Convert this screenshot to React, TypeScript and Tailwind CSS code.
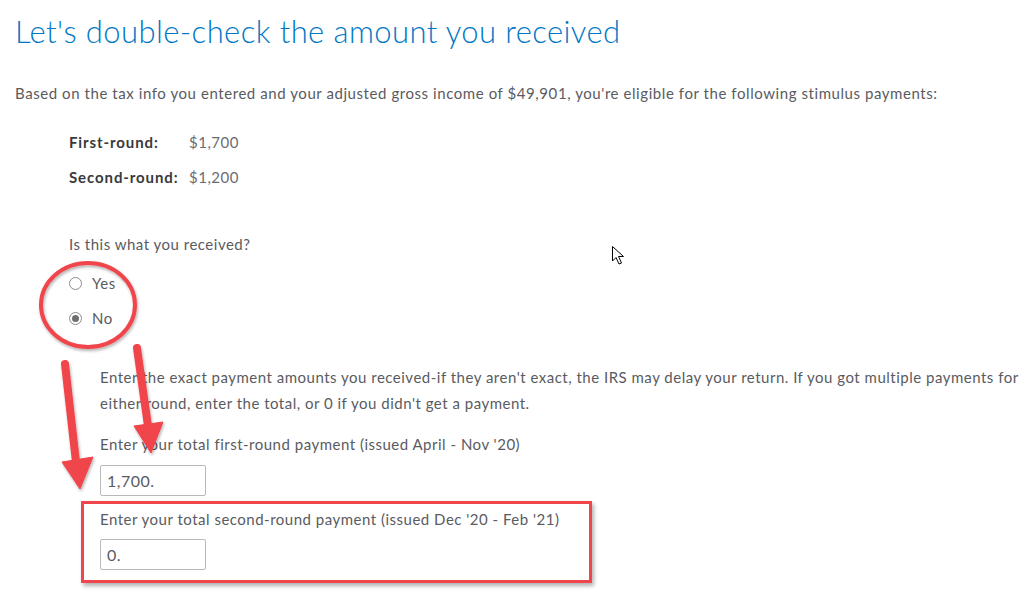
const font = "font-['Lato','Open_Sans',sans-serif]";

function Radio({ label, checked }: { label: string; checked?: boolean }) {
  return (
    <div className="flex items-center h-[35px]">
      <span className="w-[13px] h-[13px] rounded-full border border-[#8d8d8d] bg-white flex items-center justify-center">
        {checked && <span className="w-[7px] h-[7px] rounded-full bg-[#6f6f6f]" />}
      </span>
      <span className="ml-[10px] text-[15px] tracking-[0.5px] text-[#5a5b5f]">{label}</span>
    </div>
  );
}

function Amount({ value }: { value: string }) {
  return (
    <div className="w-[106px] h-[31px] border border-[#b9b9b9] rounded-[2px] flex items-center px-[6px] text-[16px] tracking-[0.5px] text-[#5a5b5f]">
      {value}
    </div>
  );
}

export default function App() {
  return (
    <div className={`relative w-[1029px] h-[602px] bg-white overflow-hidden pl-[15px] ${font}`}>
      <h1 className="text-[31px] font-light leading-[62px] text-[#0077c5] tracking-[0.4px]">
        Let's double-check the amount you received
      </h1>
      <p className="mt-[19px] text-[15px] tracking-[0.57px] leading-[24px] text-[#5a5b5f]">
        Based on the tax info you entered and your adjusted gross income of $49,901, you're eligible for the following stimulus payments:
      </p>

      <div className="ml-[54px] mt-[20px] text-[15px] tracking-[0.5px]">
        <div className="flex leading-[35px]">
          <span className="w-[120px] font-bold tracking-[0.9px] text-[#393a3d]">First-round:</span>
          <span className="text-[#6b6c72]">$1,700</span>
        </div>
        <div className="flex leading-[35px]">
          <span className="w-[120px] font-bold tracking-[0.9px] text-[#393a3d]">Second-round:</span>
          <span className="text-[#6b6c72]">$1,200</span>
        </div>

        <p className="mt-[37px] leading-[24px] text-[#5a5b5f]">Is this what you received?</p>
        <div className="mt-[10px]">
          <Radio label="Yes" />
          <Radio label="No" checked />
        </div>
      </div>

      <div className="ml-[85px] text-[15px] tracking-[0.5px] text-[#5a5b5f]">
        <p className="mt-[28px] leading-[26px] w-[925px]">
          Enter the exact payment amounts you received-if they aren't exact, the IRS may delay your return. If you got multiple payments for either round, enter the total, or 0 if you didn't get a payment.
        </p>
        <p className="mt-[16px] leading-[24px]">Enter your total first-round payment (issued April - Nov '20)</p>
        <div className="mt-[9px]">
          <Amount value="1,700." />
        </div>

        <div className="mt-[5px] ml-[-19px] w-[511px] border-[3px] border-[#f0454b] pl-[16px] pt-[3px] pb-[10px] shadow-[2px_3px_4px_rgba(0,0,0,0.3)]">
          <p className="leading-[24px]">Enter your total second-round payment (issued Dec '20 - Feb '21)</p>
          <div className="mt-[8px]">
            <Amount value="0." />
          </div>
        </div>
      </div>

      {/* annotations */}
      <svg className="absolute left-0 top-0 pointer-events-none" width="1029" height="602">
        <defs>
          <filter id="sh" x="-20%" y="-20%" width="140%" height="140%">
            <feDropShadow dx="1" dy="2" stdDeviation="1.5" floodColor="#000" floodOpacity="0.3" />
          </filter>
        </defs>
        <g filter="url(#sh)" fill="#f0454b" stroke="#f0454b">
          <ellipse cx="88" cy="305" rx="47" ry="42" fill="none" strokeWidth="4" />
          <line x1="65" y1="364" x2="76" y2="462" strokeWidth="8" strokeLinecap="round" />
          <polygon points="62,462 93,457 80,489" strokeWidth="1" strokeLinejoin="round" />
          <line x1="137" y1="348" x2="148" y2="426" strokeWidth="8" strokeLinecap="round" />
          <polygon points="134,426 163,422 151,453" strokeWidth="1" strokeLinejoin="round" />
        </g>
        <path d="M612.5 246.5 L612.5 261 L616 257.5 L619 264 L621.5 263 L618.5 256.5 L623.5 256.5 Z" fill="#fff" stroke="#000" strokeWidth="1" />
      </svg>
    </div>
  );
}
